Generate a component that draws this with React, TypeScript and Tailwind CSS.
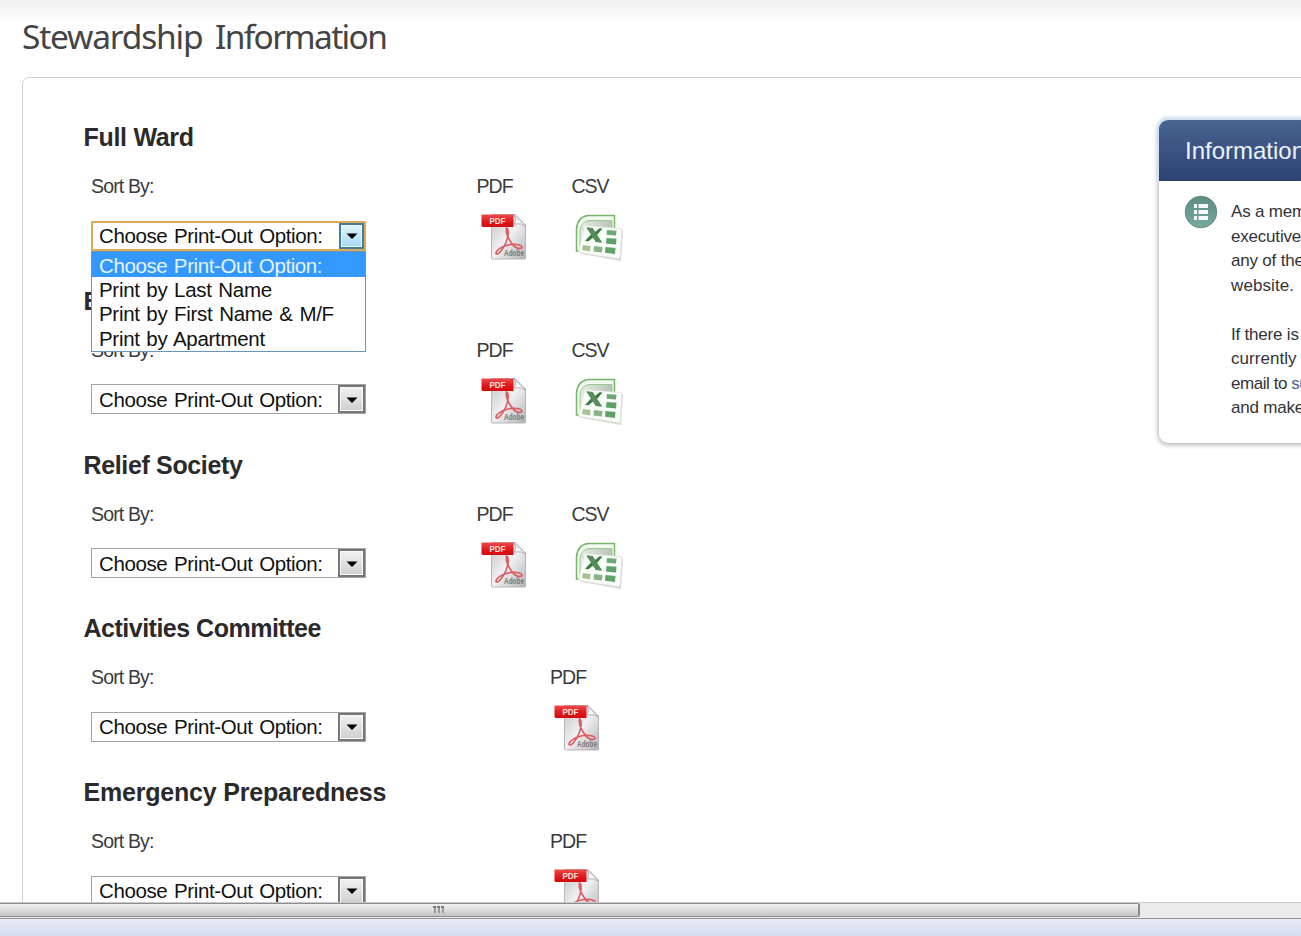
type SectionData = { title: string; csv: boolean; open?: boolean; tracking: string };

const sections: SectionData[] = [
  { title: "Full Ward", csv: true, open: true, tracking: "tracking-[-0.3px]" },
  { title: "Elders Quorum", csv: true, tracking: "tracking-[-0.3px]" },
  { title: "Relief Society", csv: true, tracking: "tracking-[-0.35px]" },
  { title: "Activities Committee", csv: false, tracking: "tracking-[-0.5px]" },
  { title: "Emergency Preparedness", csv: false, tracking: "tracking-[-0.2px]" },
];

const options = [
  "Choose Print-Out Option:",
  "Print by Last Name",
  "Print by First Name & M/F",
  "Print by Apartment",
];

function PdfIcon() {
  return (
    <svg width="46" height="48" viewBox="0 0 46 48" className="block">
      <defs>
        <linearGradient id="page" x1="0" y1="0" x2="1" y2="1">
          <stop offset="0" stopColor="#c4c4c7" />
          <stop offset="0.5" stopColor="#f0f0f2" />
          <stop offset="1" stopColor="#b4b4b8" />
        </linearGradient>
        <linearGradient id="banner" x1="0" y1="0" x2="0" y2="1">
          <stop offset="0" stopColor="#ee4b4b" />
          <stop offset="0.5" stopColor="#df1d20" />
          <stop offset="1" stopColor="#d3080c" />
        </linearGradient>
      </defs>
      <path d="M11 1.500H34L44.500 12V45Q44.500 46 43.500 46H11.500Q10.500 46 10.500 45V2Z" fill="url(#page)" stroke="#a9a9ad" strokeWidth="0.8" />
      <path d="M33 1.500Q36 6 33.500 11Q40 9.500 44.500 13Z" fill="#fafafa" stroke="#999" strokeWidth="0.7" />
      <path d="M25.500 15C24.500 19 27 25 30.500 30C33.500 35 39 37 41 34.500C41 31.500 33 30.500 27 32C20 33.500 14.500 38 15 40.500C17 43 22 36.500 25 29.500C27.500 23.500 28 16 25.500 15Z" fill="none" stroke="#dc5a60" strokeWidth="1.600" />
      <path d="M0.500 1.500H32.500V14H2Q0.500 14 0.500 12.500Z" fill="url(#banner)" />
      <text x="8.500" y="11" fontFamily="Liberation Sans, sans-serif" fontWeight="bold" fontSize="8.500" textLength="16" lengthAdjust="spacingAndGlyphs" fill="#ffe0da">PDF</text>
      <text x="23" y="43" fontFamily="Liberation Sans, sans-serif" fontWeight="bold" fontSize="8.500" textLength="20" lengthAdjust="spacingAndGlyphs" fill="#77777b">Adobe</text>
    </svg>
  );
}

function SheetIcon() {
  return (
    <svg width="50" height="50" viewBox="0 0 50 50" className="block">
      <defs>
        <linearGradient id="back" x1="0" y1="0" x2="1" y2="0">
          <stop offset="0" stopColor="#e3efe0" />
          <stop offset="1" stopColor="#b9c2ba" />
        </linearGradient>
      </defs>
      <path d="M14 2.500H40.500V38H2.500V16Q3.500 4 14 2.500Z" fill="#f3faf0" stroke="#74b867" strokeWidth="1.500" />
      <path d="M15 7.500H38V36H6V18Q7 8.500 15 7.500Z" fill="url(#back)" stroke="#9cc893" strokeWidth="1" />
      <path d="M11.500 14L49 16.800L47 48L5.500 40.500Z" fill="#aab0aa" opacity="0.500" />
      <path d="M10.500 12.500L48 15.800L46 46L4.500 39.500Z" fill="#fafcf9" stroke="#dce2da" strokeWidth="0.700" />
      <path d="M12.500 14.500L18.500 15L21 19L25.500 15.200L28.500 15.500L23 22L28 29.500L22 29L19 24.500L14.500 28.200L11 28L17 21.500Z" fill="#3a7c43" />
      <path d="M12.500 14.500L18.500 15L28 29.500L22 29Z" fill="#568f59" />
      <path d="M33 17L42.500 17.800L42 22.500L32.600 21.700Z" fill="#6ba873" />
      <path d="M32.500 25L42.500 25.800L42 31.500L32 30.600Z" fill="#5c9f67" />
      <path d="M9 32L16.500 33L16 38.500L8 37Z" fill="#a6c290" />
      <path d="M20 33L28.500 34L28 39.500L19.500 38.500Z" fill="#88b384" />
      <path d="M31.500 34L41.500 35L41 41L31 39.800Z" fill="#5fa269" />
    </svg>
  );
}

function Select({ open }: { open?: boolean }) {
  return (
    <div className="relative h-[30px] w-[275px]">
      <div
        className={
          open
            ? "flex h-full items-stretch rounded-[1px] border-2 border-[#dcaa57] bg-white pl-[6px]"
            : "flex h-full items-stretch border border-[#a2a2a4] bg-white pl-[7px]"
        }
      >
        <span className="flex-1 self-center pt-[1px] text-[20.5px] leading-[24px] tracking-[-0.4px] [word-spacing:1.5px] whitespace-nowrap text-[#111]">
          {options[0]}
        </span>
        <span
          className={
            open
              ? "flex w-[25px] items-center justify-center border-2 border-[#477b9c] bg-linear-to-b from-[#e2f4fc] to-[#a5d8f2] shadow-[inset_0_0_0_1px_#eefaff]"
              : "flex w-[27px] items-center justify-center border-2 border-[#777] bg-linear-to-b from-[#f2f2f2] to-[#cfcfcf] shadow-[inset_0_0_0_1px_#fafafa]"
          }
        >
          <svg width="12" height="7" viewBox="0 0 12 7" className="mt-[2px]">
            <path d="M0.500 0.500H11.500L6 6Z" fill="#000" />
          </svg>
        </span>
      </div>
      {open && (
        <ul className="absolute top-[30px] left-0 z-10 h-[101px] w-[275px] border border-[#6a95c0] bg-white text-[20.5px] tracking-[-0.3px] [word-spacing:1.3px] text-[#111]">
          {options.map((o, i) => (
            <li
              key={o}
              className={
                i === 0
                  ? "h-[25px] bg-[#3399ff] pl-[7px] leading-[27px] tracking-[-0.4px] whitespace-nowrap text-[#e6f3ff]"
                  : "h-[24.5px] pl-[7px] leading-[26px] whitespace-nowrap"
              }
            >
              {o}
            </li>
          ))}
        </ul>
      )}
    </div>
  );
}

function Section({ title, csv, open, tracking }: SectionData) {
  return (
    <section className="h-[163.75px]">
      <h2 className={`h-[34px] pl-[0.5px] text-[25px] leading-[34px] font-bold whitespace-nowrap text-[#2a2a2c] ${tracking}`}>{title}</h2>
      <div className="flex pt-[20px] pl-[8px] text-[19.5px] leading-[24px] text-[#3a3a3e]">
        <div className={csv ? "w-[385.5px]" : "w-[459px]"}>
          <div className="mb-[22.5px] h-[24px] tracking-[-0.85px]">Sort By:</div>
          <Select open={open} />
        </div>
        <div className="w-[95px]">
          <div className="mb-[15px] h-[24px] tracking-[-0.9px]">PDF</div>
          <div className="pl-[4px]">
            <PdfIcon />
          </div>
        </div>
        {csv && (
          <div className="w-[95px]">
            <div className="mb-[15px] h-[24px] tracking-[-1px]">CSV</div>
            <div className="pl-[2px]">
              <SheetIcon />
            </div>
          </div>
        )}
      </div>
    </section>
  );
}

function InfoPanel() {
  return (
    <aside className="mt-[42px] h-[323px] w-[330px] shrink-0 rounded-[9px] bg-white shadow-[0_1px_5px_1px_#b4b4b8]">
      <h3 className="h-[61px] rounded-t-[9px] bg-linear-to-b from-[#49648f] to-[#2c4273] pl-[26px] text-[24px] leading-[62px] text-[#eef2fa] shadow-[0_-1px_3px_2px_#d3e1f4]">
        Information
      </h3>
      <div className="relative flex gap-[13px] bg-white pt-[14px] pl-[25px]">
        <svg width="34" height="34" viewBox="0 0 34 34" className="shrink-0">
          <defs>
            <linearGradient id="disc" x1="0" y1="0" x2="0" y2="1">
              <stop offset="0" stopColor="#5d8c81" />
              <stop offset="1" stopColor="#78aa9d" />
            </linearGradient>
          </defs>
          <circle cx="17" cy="17" r="15.800" fill="url(#disc)" stroke="#557e75" strokeWidth="0.800" />
          <path d="M10 9h3v4h-3zM14.500 9H24v4h-9.500zM10 15h3v4h-3zM14.500 15H24v4h-9.500zM10 21h3v4h-3zM14.500 21H24v4h-9.500z" fill="#f4faf8" />
        </svg>
        <div className="pt-[5px] text-[17px] leading-[24.5px] tracking-[-0.2px] whitespace-nowrap text-[#333337]">
          <p>As a member of the</p>
          <p>executive committee</p>
          <p>any of the lists on this</p>
          <p className="tracking-[0.1px]">website.</p>
          <p className="pt-[24.5px]">If there is a list not</p>
          <p className="tracking-[0.05px]">currently available</p>
          <p className="tracking-[-0.45px]">
            email to <a className="text-[#4a62a0]">support</a>
          </p>
          <p>and make a request</p>
        </div>
      </div>
    </aside>
  );
}

export default function App() {
  return (
    <div className="flex h-[936px] w-[1301px] flex-col overflow-hidden bg-white font-['Liberation_Sans',Arial,sans-serif]">
      <main className="h-[902px] overflow-hidden bg-linear-to-b from-[#f1f1f1] to-white to-[22px]">
        <h1 className="h-[77px] pt-[14px] pl-[22px] font-['Noto_Sans',sans-serif] text-[33.5px] leading-[44px] tracking-[-1.2px] whitespace-nowrap text-[#444446] [word-spacing:5px]">
          Stewardship <span className="tracking-[-1.65px]">Information</span>
        </h1>
        <div className="ml-[22px] flex h-[900px] w-[1500px] rounded-tl-[7px] border border-[#cfcfcf] bg-white">
          <div className="w-[1136px] shrink-0 pt-[42px] pl-[60px]">
            {sections.map((s) => (
              <Section key={s.title} {...s} />
            ))}
          </div>
          <InfoPanel />
        </div>
      </main>
      <div className="h-[17px] shrink-0 border-t border-b border-t-[#c9c9c9] border-b-[#929298] bg-[#ebebeb]">
        <div className="flex h-[14px] w-[1140px] justify-start rounded-r-[2px] border-y border-r-2 border-[#8d8d8f] bg-linear-to-b from-[#f1f1f1] via-[#dedede] to-[#c3c3c3] pl-[433px]">
          <svg width="12" height="8" viewBox="0 0 12 8" className="mt-[2px]">
            <path d="M0 1h3M4 1h3M8 1h3" stroke="#555" strokeWidth="1.500" />
            <path d="M2 1v6M6 1v6M10 1v6" stroke="#777" strokeWidth="1.300" />
          </svg>
        </div>
      </div>
      <div className="h-[17px] shrink-0 bg-linear-to-b from-[#e7ebf4] to-[#d2ddf0]" />
    </div>
  );
}
